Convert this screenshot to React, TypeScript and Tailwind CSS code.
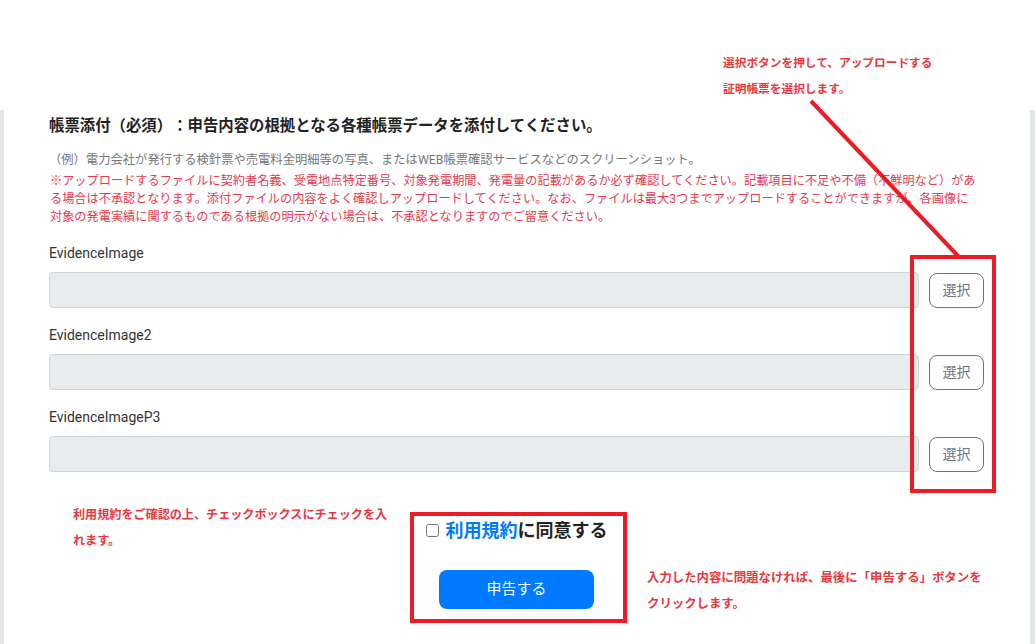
import React from 'react';

const fields = ['EvidenceImage', 'EvidenceImage2', 'EvidenceImageP3'];

function FileField({ label }: { label: string }) {
  return (
    <div className="mb-[16px]">
      <label className="block h-[22px] leading-[22px] text-[14px] text-[#333] mb-[8px]">{label}</label>
      <div className="flex items-center gap-[10px]">
        <div className="flex-1 h-[36px] bg-[#e9ecef] border border-[#ced4da] rounded-[4px]" />
        <button
          type="button"
          className="w-[55px] h-[35px] border border-[#6c757d] rounded-[8px] text-[#6c757d] text-[14px] bg-white"
        >
          選択
        </button>
      </div>
    </div>
  );
}

export default function App() {
  return (
    <div
      className="relative w-[1035px] h-[644px] overflow-hidden bg-white [text-spacing-trim:space-all]"
      style={{ fontFamily: 'Roboto, "Noto Sans CJK JP", sans-serif' }}
    >
      <div className="h-[110px]" />
      <div className="flex h-[534px]">
        <div className="w-[4px] bg-[#e3e6e8]" />
        <div className="flex-1 pl-[45px] pr-[46px] pt-[5px]">
          <h3 className="text-[15.4px] leading-[22px] font-bold text-[#222]">
            帳票添付（必須）：申告内容の根拠となる各種帳票データを添付してください。
          </h3>
          <p className="mt-[14px] text-[12.3px] leading-[18px] text-[#777]">
            （例）電力会社が発行する検針票や売電料金明細等の写真、またはWEB帳票確認サービスなどのスクリーンショット。
          </p>
          <p className="mt-[3px] pl-[1px] pr-[5px] text-[12.2px] leading-[18px] text-[#e23c50]">
            ※アップロードするファイルに契約者名義、受電地点特定番号、対象発電期間、発電量の記載があるか必ず確認してください。記載項目に不足や不備（不鮮明など）がある場合は不承認となります。添付ファイルの内容をよく確認しアップロードしてください。なお、ファイルは最大3つまでアップロードすることができますが、各画像に対象の発電実績に関するものである根拠の明示がない場合は、不承認となりますのでご留意ください。
          </p>
          <div className="mt-[16px]">
            {fields.map((f) => (
              <FileField key={f} label={f} />
            ))}
          </div>
          <div className="mt-[45px] flex flex-col items-center">
            <label className="flex items-center h-[27px] text-[18px] font-bold text-[#222]">
              <input type="checkbox" className="w-[13px] h-[13px] mr-[7px]" />
              <span className="text-[#007bff]">利用規約</span>に同意する
            </label>
            <button
              type="button"
              className="mt-[26px] w-[155px] h-[39px] rounded-[8px] bg-[#007bff] text-white text-[15px]"
            >
              申告する
            </button>
          </div>
        </div>
        <div className="w-[5px] bg-[#e3e6e8]" />
      </div>

      {/* annotations */}
      <div className="absolute left-[723px] top-[50px] text-[11.7px] leading-[26px] font-bold text-[#e8383f] whitespace-nowrap">
        <div>選択ボタンを押して、アップロードする</div>
        <div>証明帳票を選択します。</div>
      </div>
      <svg className="absolute left-0 top-0" width="1035" height="644">
        <line x1="811" y1="101" x2="959" y2="257" stroke="#ed1c24" strokeWidth="4" />
      </svg>
      <div className="absolute left-[910px] top-[255px] w-[86px] h-[238px] border-[4px] border-[#ed1c24]" />

      <div className="absolute left-[73px] top-[502px] text-[12.1px] leading-[26px] font-bold text-[#e8383f] whitespace-nowrap">
        <div>利用規約をご確認の上、チェックボックスにチェックを入</div>
        <div>れます。</div>
      </div>
      <div className="absolute left-[410px] top-[512px] w-[217px] h-[111px] border-[4px] border-[#ed1c24]" />
      <div className="absolute left-[647px] top-[565px] text-[12.4px] leading-[26px] font-bold text-[#e8383f] whitespace-nowrap [text-spacing-trim:normal]">
        <div>入力した内容に問題なければ、最後に「申告する」ボタンを</div>
        <div>クリックします。</div>
      </div>
    </div>
  );
}
